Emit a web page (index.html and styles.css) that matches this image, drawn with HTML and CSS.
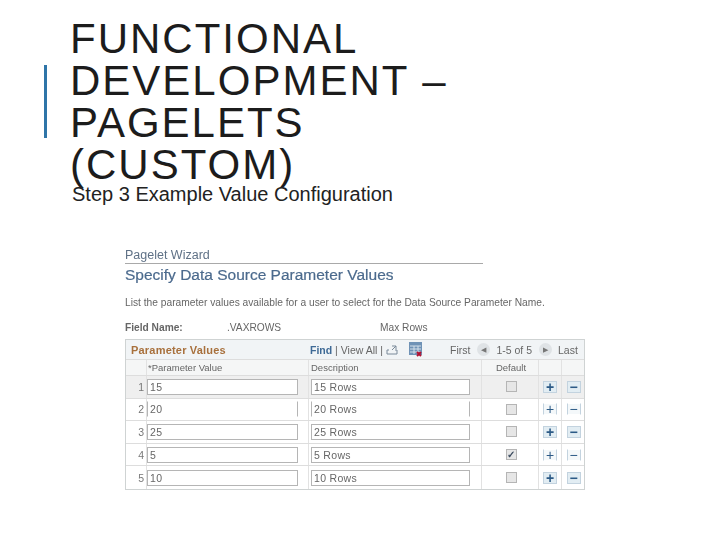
FILE: index.html
```html
<!DOCTYPE html>
<html>
<head>
<meta charset="utf-8">
<title>Functional Development</title>
<link rel="stylesheet" href="styles.css">
</head>
<body>
<header class="head">
  <div class="bar"></div>
  <h1 class="title">FUNCTIONAL DEVELOPMENT – PAGELETS (CUSTOM)</h1>
</header>
<p class="sub">Step 3 Example Value Configuration</p>
<section class="shot">
  <div class="crumb">Pagelet Wizard</div>
  <h2 class="pagehead">Specify Data Source Parameter Values</h2>
  <p class="intro">List the parameter values available for a user to select for the Data Source Parameter Name.</p>
  <div class="field"><b class="flabel">Field Name:</b><span class="fname">.VAXROWS</span><span class="fdesc">Max Rows</span></div>
  <div class="grid">
    <div class="ghead">
      <b class="gtitle">Parameter Values</b>
      <span class="links"><span class="lnk">Find</span> | View All | 
        <svg class="ico" width="13" height="10" viewBox="0 0 13 10"><path d="M1 9V5h2M1 9h10V5H9M6 1h4v3M10 1L6 5" fill="none" stroke="#7a8a9a"/></svg>
      </span>
      <svg class="ico2" width="13" height="15" viewBox="0 0 13 15"><rect width="13" height="13" fill="#6f92b6"/><path d="M1 4h11M1 7h11M1 10h11M5 4v8M9 4v8" stroke="#d5e0ea"/><path d="M8 10l4 4M12 10l-4 4" stroke="#b01030" stroke-width="2"/></svg>
      <span class="pager">First
        <span class="nav">◀</span>
        <span>1-5 of 5</span>
        <span class="nav">▶</span>
        Last</span>
    </div>
    <div class="row colhead">
      <span class="c-n"></span><span class="c-v">*Parameter Value</span><span class="c-d">Description</span><span class="c-c">Default</span><span class="c-b"></span><span class="c-b"></span>
    </div>
    <div class="row shade">
      <span class="c-n">1</span><span class="c-v"><span class="inp v">15</span></span><span class="c-d"><span class="inp d">15 Rows</span></span><span class="c-c"><span class="chk"></span></span><span class="c-b"><span class="btn">+</span></span><span class="c-b"><span class="btn">−</span></span>
    </div>
    <div class="row faded">
      <span class="c-n">2</span><span class="c-v"><span class="inp v">20</span></span><span class="c-d"><span class="inp d">20 Rows</span></span><span class="c-c"><span class="chk"></span></span><span class="c-b"><span class="btn">+</span></span><span class="c-b"><span class="btn">−</span></span>
    </div>
    <div class="row">
      <span class="c-n">3</span><span class="c-v"><span class="inp v">25</span></span><span class="c-d"><span class="inp d">25 Rows</span></span><span class="c-c"><span class="chk"></span></span><span class="c-b"><span class="btn">+</span></span><span class="c-b"><span class="btn">−</span></span>
    </div>
    <div class="row thinbtn">
      <span class="c-n">4</span><span class="c-v"><span class="inp v">5</span></span><span class="c-d"><span class="inp d">5 Rows</span></span><span class="c-c"><span class="chk">✓</span></span><span class="c-b"><span class="btn">+</span></span><span class="c-b"><span class="btn">−</span></span>
    </div>
    <div class="row last">
      <span class="c-n">5</span><span class="c-v"><span class="inp v">10</span></span><span class="c-d"><span class="inp d">10 Rows</span></span><span class="c-c"><span class="chk"></span></span><span class="c-b"><span class="btn">+</span></span><span class="c-b"><span class="btn">−</span></span>
    </div>
  </div>
</section>
</body>
</html>
```
FILE: styles.css
```css
* { box-sizing: border-box; }
html, body { margin: 0; padding: 0; background: #fff; }
body { width: 720px; height: 540px; overflow: hidden; font-family: "Liberation Sans", Arial, sans-serif; color: #1a1a1a; }

.head { display: flex; align-items: flex-start; height: 183px; padding: 18px 0 0 44px; }
.bar { width: 3px; height: 73px; margin-top: 47px; background: #2f75a8; flex: none; }
.title { margin: 0 0 0 23px; width: 400px; font-size: 42px; line-height: 42px; font-weight: 400; letter-spacing: 2px; color: #1c1c1c; }
.sub { margin: 0 0 0 72px; font-size: 20px; line-height: 22px; color: #222; }

.shot { margin: 41px 0 0 125px; width: 460px; filter: blur(0.4px); }
.crumb { font-size: 12.5px; line-height: 15px; color: #5f7186; height: 17px; padding-top: 2px; }
.pagehead { margin: 0; width: 358px; border-top: 1px solid #a9a9a9; font-size: 15.5px; line-height: 20px; font-weight: 400; color: #4b6a8d; -webkit-text-stroke: 0.2px #4b6a8d; padding-top: 1px; height: 24px; }
.intro { margin: 9px 0 0; font-size: 10.22px; line-height: 14px; color: #666; white-space: nowrap; }
.field { display: flex; margin-top: 11px; height: 18px; font-size: 10.2px; line-height: 14px; color: #555; }
.flabel { width: 102px; font-weight: 700; color: #666; }
.fname { width: 153px; color: #666; }
.fdesc { color: #666; }

.grid { border: 1px solid #cfd3d3; width: 460px; }
.ghead { display: flex; align-items: center; height: 20px; background: #f1f4f6; font-size: 10.5px; color: #666; border-bottom: 1px solid #ddd; }
.gtitle { width: 184px; padding-left: 5px; color: #a8703c; font-size: 11px; letter-spacing: 0.2px; }
.links { width: 99px; white-space: nowrap; }
.lnk { color: #3f6a96; font-weight: 700; }
.ico { vertical-align: -1px; }
.ico2 { flex: none; margin-right: 27px; }
.pager { display: flex; align-items: center; gap: 6.5px; margin-left: 1px; white-space: nowrap; }
.nav { display: inline-flex; align-items: center; justify-content: center; width: 13px; height: 13px; border-radius: 50%; background: #dfe3e6; color: #777; font-size: 7px; }

.row { display: flex; height: 22.6px; border-bottom: 1px solid #ddd; background: #fff; font-size: 10.5px; color: #777; }
.row.last { border-bottom: 0; }
.row.shade { background: #efefef; }
.row.colhead { height: 16px; font-size: 9.5px; color: #666; background: #f5f6f6; }
.row > span { display: flex; align-items: center; border-right: 1px solid #e2e2e2; flex: none; }
.row > span:last-child { border-right: 0; }
.colhead .c-v { padding-left: 1px; }
.colhead .c-d { padding-left: 2px; }
.c-n { width: 21px; justify-content: flex-end; padding-right: 2px; }
.c-v { width: 162px; padding-left: 0; }
.c-d { width: 173px; padding-left: 2px; }
.c-c { width: 57px; justify-content: center; padding-left: 2px; }
.c-b { width: 23px; justify-content: center; }
.inp { display: block; height: 16px; line-height: 14px; border: 1px solid #b5b5b5; background: #fff; padding-left: 2px; font-size: 10.5px; color: #666; letter-spacing: 0.3px; }
.inp.v { width: 151px; }
.inp.d { width: 159px; }
.faded .inp { border-top-color: #fff; border-bottom-color: #fff; }
.chk { display: flex; align-items: center; justify-content: center; width: 11px; height: 11px; border: 1px solid #b5b5b5; background: #e6e6e6; color: #3c4c60; font-size: 10px; font-weight: 700; }
.btn { display: flex; align-items: center; justify-content: center; width: 14px; height: 12px; border: 1px solid #c3d3df; background: #e2edf3; color: #2c5a86; font-size: 14px; line-height: 10px; font-weight: 700; }
.faded .btn, .thinbtn .btn { border-top-color: #fff; border-bottom-color: #fff; background: #f4f8fa; font-weight: 400; }
```
